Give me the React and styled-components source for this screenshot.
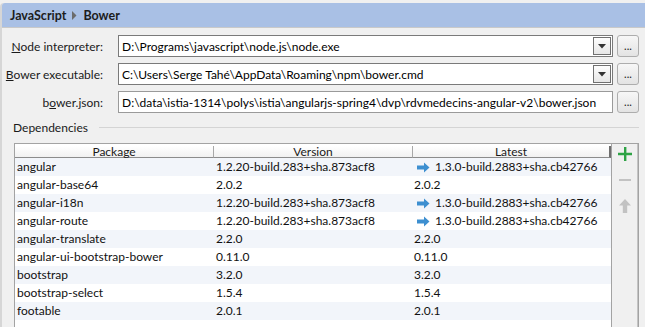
import styled, { createGlobalStyle } from "styled-components";

const GlobalStyle = createGlobalStyle`
    html, body {
        margin: 0;
        padding: 0;
        background: #f0f0f0;
    }
    body {
        font-family: Lato, "Noto Sans", sans-serif;
        font-size: 12px;
        color: #000;
    }
`;

const Page = styled.div`
    width: 645px;
    height: 327px;
    overflow: hidden;
    box-sizing: border-box;
    padding-top: 3px;
    background: #f0f0f0;
`;

const Frame = styled.div`
    height: 100%;
    border-left: 2px solid #d6d6d6;
    border-top-left-radius: 4px;
`;

const Header = styled.div`
    height: 24px;
    background: #a9c0e5;
    border-top-left-radius: 3px;
    border-bottom: 1px solid #c9c9c9;
    display: flex;
    align-items: center;
    gap: 6px;
    padding-left: 8px;
    font-weight: bold;
    font-size: 12.5px;
    color: #1c1c1c;
`;

const Crumb = styled.span`
    display: inline-flex;
    align-items: center;
`;

const Form = styled.div`
    display: grid;
    grid-template-columns: 101px 495px 22px;
    column-gap: 15px;
    row-gap: 6px;
    padding: 7px 0 0 0;
    & > button {
        margin-left: -11px;
    }
`;

const Label = styled.label`
    justify-self: end;
    align-self: center;
    white-space: nowrap;
    color: #1a1a1a;
    & u {
        text-decoration: underline;
    }
`;

const Field = styled.div`
    height: 22px;
    box-sizing: border-box;
    background: #fff;
    border: 1px solid ${(p) => (p.$combo ? "#7a7a7a" : "#9a9a9a")};
    display: flex;
    align-items: center;
    padding-left: 3px;
    padding-right: 1px;
    white-space: nowrap;
    overflow: hidden;
`;

const FieldText = styled.span`
    flex: 1 1 auto;
    overflow: hidden;
`;

const DropButton = styled.span`
    width: 18px;
    height: 18px;
    box-sizing: border-box;
    border: 1px solid #707070;
    background: linear-gradient(#fdfdfd, #e6e6e6);
    display: flex;
    align-items: center;
    justify-content: center;
`;

const DotsButton = styled.button`
    width: 22px;
    height: 22px;
    padding: 0;
    box-sizing: border-box;
    border: 1px solid #adadad;
    border-radius: 3px;
    background: linear-gradient(#f7f7f7, #e3e3e3);
    font-family: inherit;
    font-size: 11px;
    line-height: 14px;
    color: #222;
`;

const SectionTitle = styled.div`
    display: flex;
    align-items: center;
    gap: 11px;
    margin: 6px 6px 0 11px;
    height: 16px;
    color: #1a1a1a;
    &::after {
        content: "";
        flex: 1 1 auto;
        height: 1px;
        background: #d4d4d4;
    }
`;

const TableBox = styled.div`
    display: flex;
    margin: 8px 6px 0 12px;
    height: 200px;
    border: 1px solid #a3a3a3;
    border-bottom: none;
`;

const Table = styled.div`
    flex: 1 1 auto;
    background: #fff;
    border-right: 1px solid #a3a3a3;
    padding-top: 2px;
    display: flex;
    flex-direction: column;
`;

const Columns = `
    display: grid;
    grid-template-columns: 199px 199px 1fr;
`;

const HeadRow = styled.div`
    ${Columns}
    height: 12px;
`;

const HeadCell = styled.div`
    text-align: center;
    line-height: 12px;
    height: 12px;
    background: linear-gradient(#ffffff, #f1f1f1);
    border-right: 1px solid #a8a8a8;
    border-bottom: 1px solid #8c8c8c;
    box-sizing: border-box;
    color: #1a1a1a;
    &:last-child {
        border-right: 2px solid #6e6e6e;
    }
`;

const Row = styled.div`
    ${Columns}
    height: 18px;
    line-height: 18px;
    background: ${(p) => (p.$alt ? "#f2f5fa" : "#ffffff")};
`;

const Cell = styled.div`
    padding-left: ${(p) => p.$pad || 2}px;
    white-space: nowrap;
    overflow: hidden;
    display: flex;
    align-items: center;
    gap: 5px;
    color: #111;
`;

const Toolbar = styled.div`
    width: 25px;
    flex: 0 0 25px;
    display: flex;
    flex-direction: column;
    align-items: center;
    gap: 12px;
    padding-top: 3px;
    border-right: 1px solid #c4c4c4;
`;

const ToolIcon = styled.svg`
    display: block;
`;

const deps = [
    ["angular", "1.2.20-build.283+sha.873acf8", "1.3.0-build.2883+sha.cb42766", true],
    ["angular-base64", "2.0.2", "2.0.2", false],
    ["angular-i18n", "1.2.20-build.283+sha.873acf8", "1.3.0-build.2883+sha.cb42766", true],
    ["angular-route", "1.2.20-build.283+sha.873acf8", "1.3.0-build.2883+sha.cb42766", true],
    ["angular-translate", "2.2.0", "2.2.0", false],
    ["angular-ui-bootstrap-bower", "0.11.0", "0.11.0", false],
    ["bootstrap", "3.2.0", "3.2.0", false],
    ["bootstrap-select", "1.5.4", "1.5.4", false],
    ["footable", "2.0.1", "2.0.1", false],
];

function UpdateArrow() {
    return (
        <svg width="13" height="11" viewBox="0 0 13 11">
            <path d="M0 3.5h7V0.5l5.5 5-5.5 5v-3H0z" fill="#3d8fd0" />
        </svg>
    );
}

function Triangle() {
    return (
        <svg width="8" height="5" viewBox="0 0 8 5">
            <path d="M0 0h8L4 4.5z" fill="#333" />
        </svg>
    );
}

function App() {
    return (
        <Page>
            <GlobalStyle />
            <Frame>
                <Header>
                    <Crumb>JavaScript</Crumb>
                    <svg width="5" height="9" viewBox="0 0 5 9">
                        <path d="M0 0l4.5 4.5L0 9z" fill="#6b6b6b" />
                    </svg>
                    <Crumb>Bower</Crumb>
                </Header>
                <Form>
                    <Label>
                        <u>N</u>ode interpreter:
                    </Label>
                    <Field $combo>
                        <FieldText>D:\Programs\javascript\node.js\node.exe</FieldText>
                        <DropButton>
                            <Triangle />
                        </DropButton>
                    </Field>
                    <DotsButton>...</DotsButton>

                    <Label>
                        <u>B</u>ower executable:
                    </Label>
                    <Field $combo>
                        <FieldText>C:\Users\Serge Tahé\AppData\Roaming\npm\bower.cmd</FieldText>
                        <DropButton>
                            <Triangle />
                        </DropButton>
                    </Field>
                    <DotsButton>...</DotsButton>

                    <Label>
                        b<u>o</u>wer.json:
                    </Label>
                    <Field>
                        <FieldText>
                            D:\data\istia-1314\polys\istia\angularjs-spring4\dvp\rdvmedecins-angular-v2\bower.json
                        </FieldText>
                    </Field>
                    <DotsButton>...</DotsButton>
                </Form>
                <SectionTitle>Dependencies</SectionTitle>
                <TableBox>
                    <Table>
                        <HeadRow>
                            <HeadCell>Package</HeadCell>
                            <HeadCell>Version</HeadCell>
                            <HeadCell>Latest</HeadCell>
                        </HeadRow>
                        {deps.map(([name, version, latest, outdated], i) => (
                            <Row key={name} $alt={i % 2 === 0}>
                                <Cell>{name}</Cell>
                                <Cell>{version}</Cell>
                                <Cell $pad={outdated ? 4 : 1}>
                                    {outdated && <UpdateArrow />}
                                    {latest}
                                </Cell>
                            </Row>
                        ))}
                    </Table>
                    <Toolbar>
                        <ToolIcon width="14" height="14" viewBox="0 0 14 14">
                            <path d="M6 0h2.4v5.8H14v2.4H8.4V14H6V8.2H0V5.8h6z" fill="#2ea345" />
                        </ToolIcon>
                        <ToolIcon width="14" height="14" viewBox="0 0 14 14">
                            <path d="M1 6h12v2H1z" fill="#c2c2c2" />
                        </ToolIcon>
                        <ToolIcon width="14" height="14" viewBox="0 0 14 14">
                            <path d="M7 0l6 6.5H9.2V14H4.8V6.5H1z" fill="#c2c2c2" />
                        </ToolIcon>
                    </Toolbar>
                </TableBox>
            </Frame>
        </Page>
    );
}

export default App;
